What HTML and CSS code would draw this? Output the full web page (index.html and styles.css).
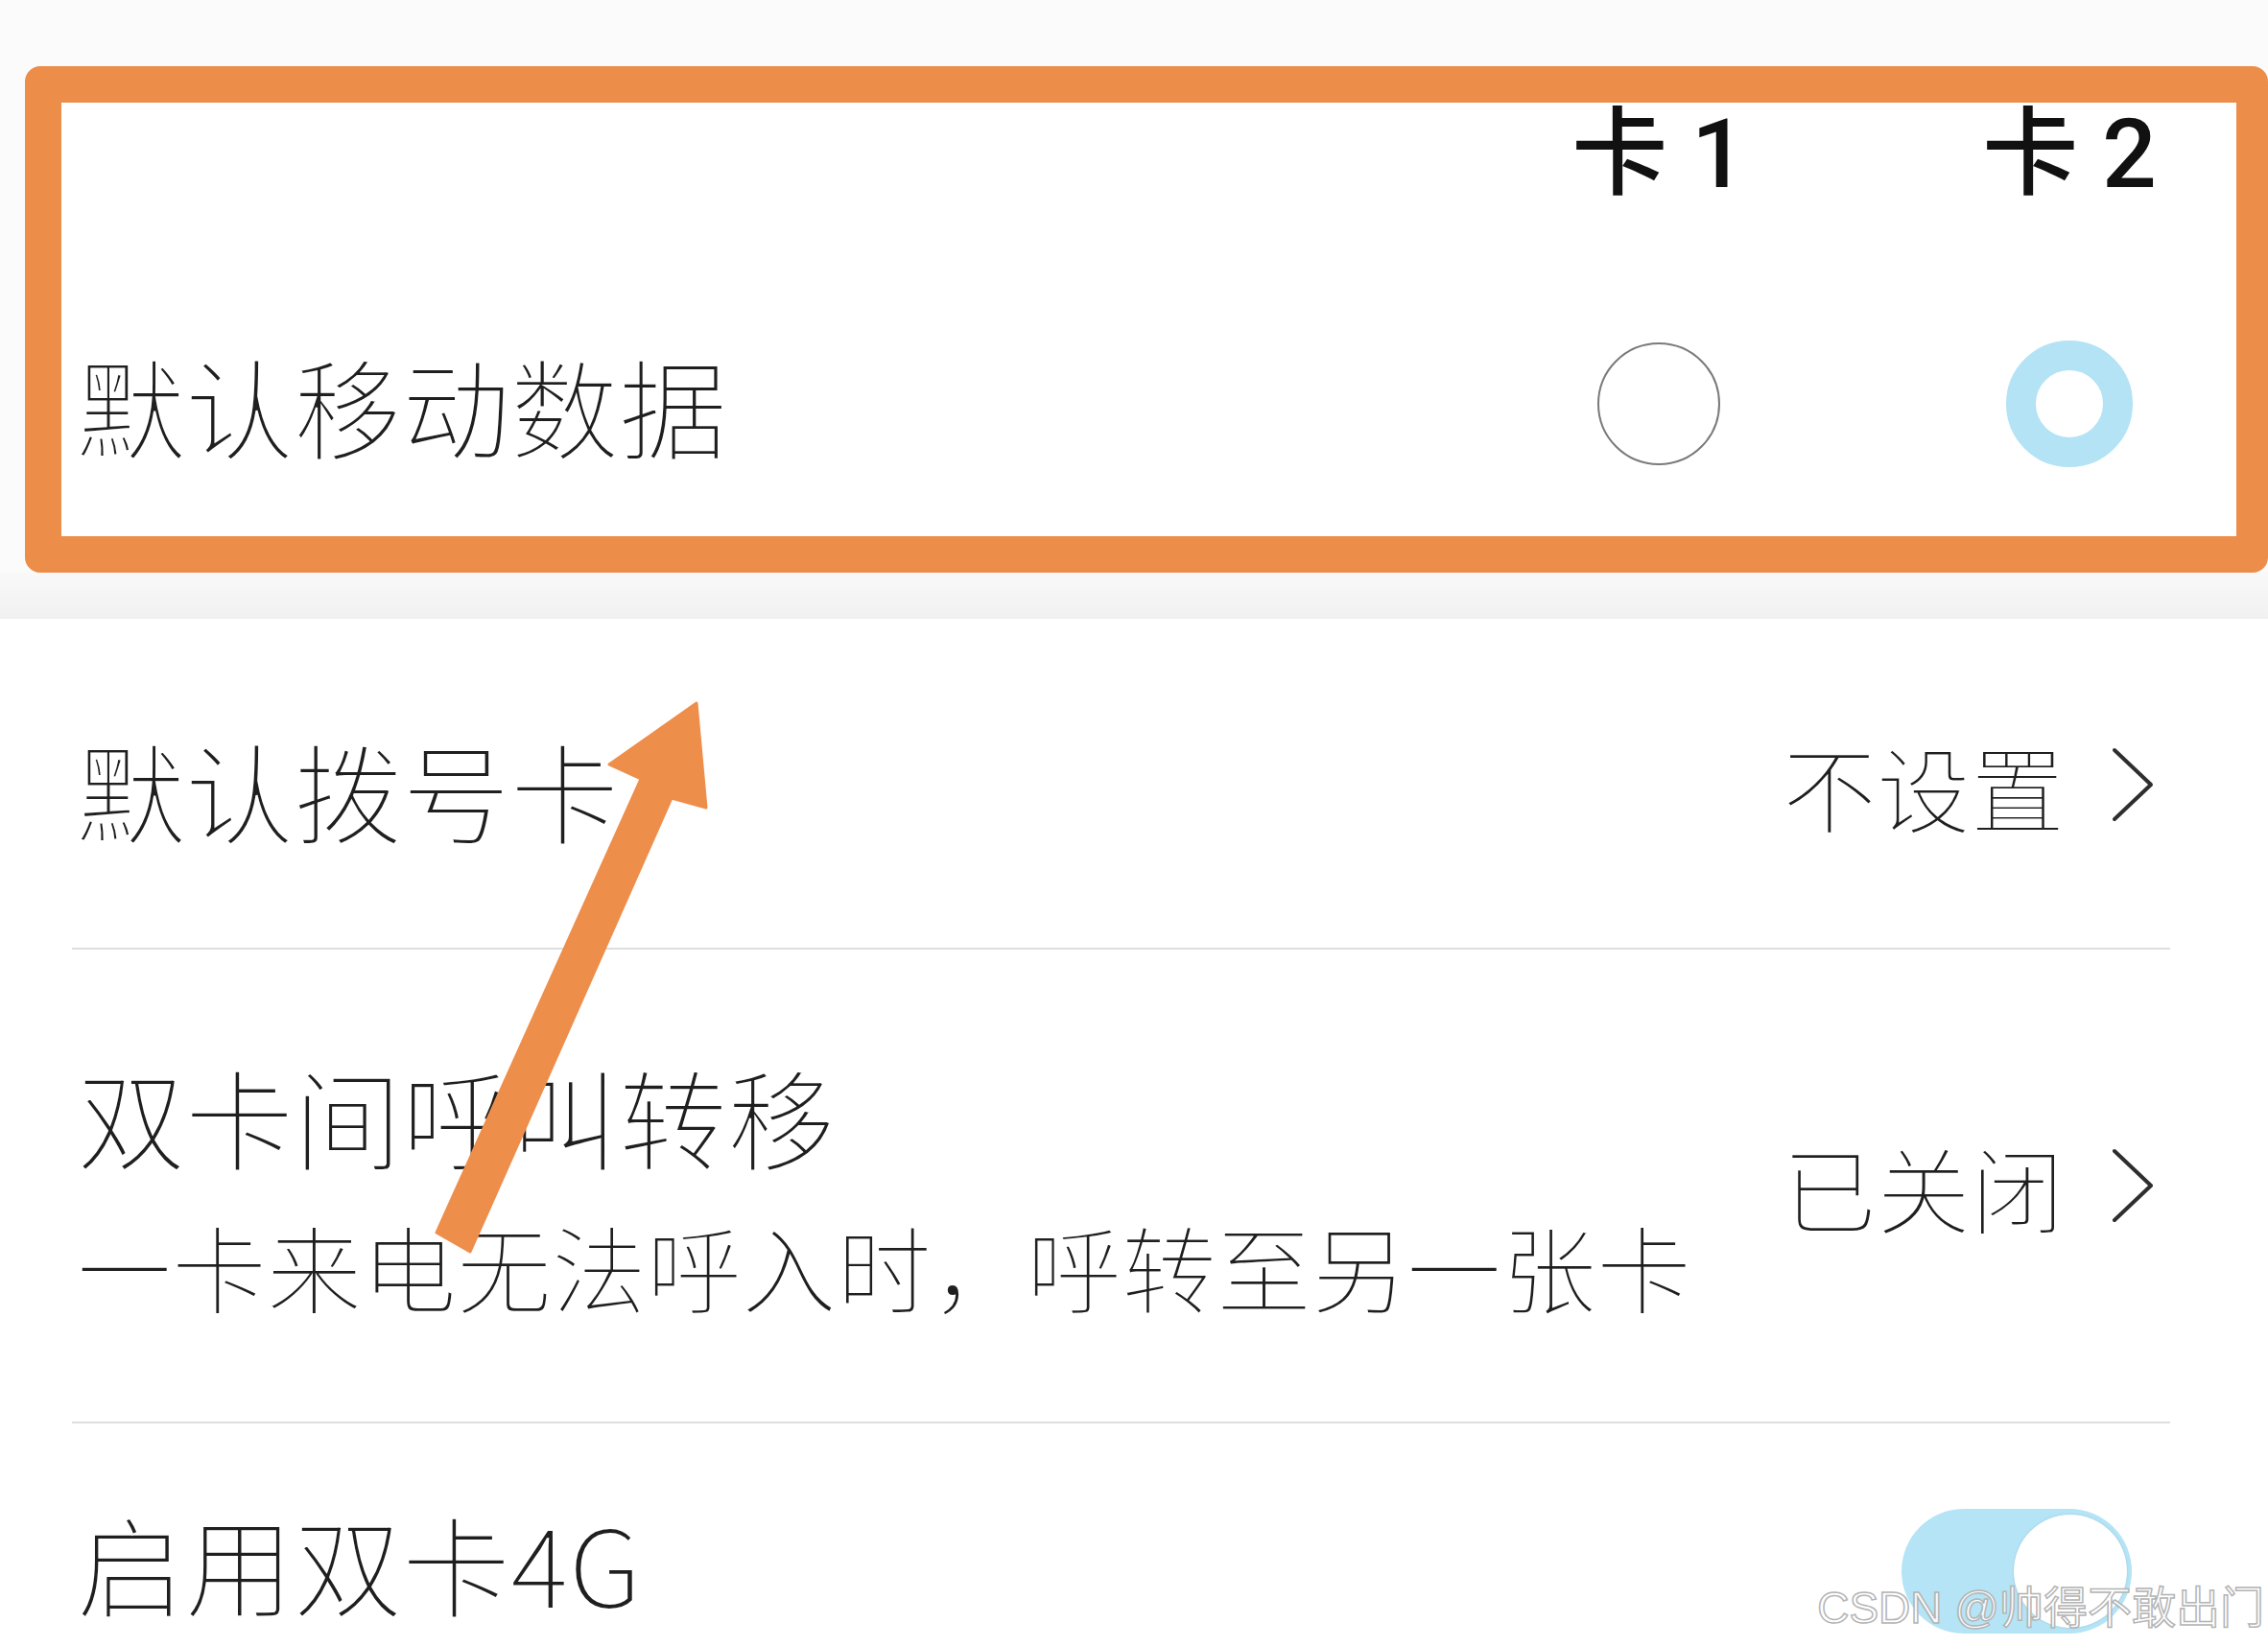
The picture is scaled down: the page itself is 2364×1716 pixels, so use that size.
FILE: index.html
```html
<!DOCTYPE html>
<html lang="zh-CN">
<head>
<meta charset="utf-8">
<title>双卡设置</title>
<link rel="stylesheet" href="styles.css">
</head>
<body>
<div class="page">
  <div class="top-area">
    <section class="sim-card">
      <div class="sim-head">
        <span class="sim-col sim-label">卡 1</span>
        <span class="sim-col sim-label">卡 2</span>
      </div>
      <div class="sim-row">
        <span class="title">默认移动数据</span>
        <span class="sim-col"><span class="radio"></span></span>
        <span class="sim-col"><span class="radio checked"></span></span>
      </div>
    </section>
  </div>
  <div class="band"></div>
  <ul class="list">
    <li class="item item-dial">
      <span class="title">默认拨号卡</span>
      <span class="value">不设置<svg class="chev" viewBox="0 0 46 80"><polyline points="4,4 42,40 4,76"/></svg></span>
    </li>
    <li class="item item-forward">
      <div class="text">
        <span class="title">双卡间呼叫转移</span>
        <span class="sub">一卡来电无法呼入时，呼转至另一张卡</span>
      </div>
      <span class="value">已关闭<svg class="chev" viewBox="0 0 46 80"><polyline points="4,4 42,40 4,76"/></svg></span>
    </li>
    <li class="item item-4g">
      <span class="title">启用双卡4G</span>
      <span class="toggle"><span class="knob"></span></span>
    </li>
  </ul>
  <svg class="arrow" viewBox="0 0 2364 1716">
    <polygon points="455,1285 668,812 635,797 726,733 736,842 700,832 490,1305"/>
  </svg>
  <div class="watermark">CSDN @帅得不敢出门</div>
</div>
</body>
</html>
```

FILE: styles.css
```css
html, body {
  margin: 0;
  padding: 0;
  background: #ffffff;
}

body {
  font-family: "Noto Sans CJK SC", "Noto Sans", sans-serif;
  color: #222222;
}

.page {
  position: relative;
  width: 2364px;
  height: 1716px;
  overflow: hidden;
  background: #ffffff;
}

.top-area {
  background: #fbfbfb;
  padding: 69px 0 0 26px;
}

.sim-card {
  box-sizing: border-box;
  height: 528px;
  border: 38px solid #ed8d4a;
  border-right-width: 33px;
  border-radius: 16px;
  background: #ffffff;
  padding: 0 74px 0 16px;
  display: flex;
  flex-direction: column;
}

.sim-head {
  display: flex;
  justify-content: flex-end;
  align-items: center;
  gap: 228px;
  height: 108px;
}

.sim-col {
  width: 200px;
  display: flex;
  justify-content: center;
  align-items: center;
}

.sim-label {
  font-family: "Roboto", "Noto Sans CJK SC", sans-serif;
  font-size: 100px;
  font-weight: 500;
  color: #111111;
  line-height: 1;
  white-space: pre;
}

.sim-row {
  display: flex;
  align-items: center;
  gap: 228px;
  margin-top: 140px;
  height: 132px;
}

.sim-row .title {
  flex: 1;
}

.title {
  font-size: 113px;
  font-weight: 300;
  line-height: 130px;
  color: #1f1f1f;
  white-space: nowrap;
  -webkit-text-stroke: 2px #ffffff;
}

.radio {
  box-sizing: border-box;
  display: block;
  width: 128px;
  height: 128px;
  border: 2px solid #7a7a7a;
  border-radius: 50%;
  background: #ffffff;
}

.radio.checked {
  width: 132px;
  height: 132px;
  border: 31px solid #b3e3f5;
}

.band {
  height: 47px;
  background: linear-gradient(#f9f9f9, #f1f1f1);
  border-bottom: 1px solid #ececec;
}

.list {
  list-style: none;
  margin: 0;
  padding: 0;
}

.item {
  box-sizing: border-box;
  display: flex;
  align-items: center;
  justify-content: space-between;
  margin: 0 102px 0 75px;
  padding: 0 16px 0 5px;
  border-bottom: 2px solid #dedede;
}

.item-dial {
  height: 345px;
  padding-top: 10px;
}

.item-dial .value {
  margin-top: -8px;
}

.item-forward {
  height: 494px;
}

.item-forward .text {
  display: flex;
  flex-direction: column;
  margin-top: 4px;
}

.item-forward .sub {
  font-size: 99px;
  font-weight: 300;
  line-height: 120px;
  margin-top: 32px;
  white-space: nowrap;
  color: #1f1f1f;
  -webkit-text-stroke: 2px #ffffff;
}

.item-4g {
  height: 288px;
  border-bottom: none;
}

.item-4g .toggle {
  margin-top: 20px;
}

.value {
  display: flex;
  align-items: center;
  font-size: 98px;
  font-weight: 300;
  line-height: 120px;
  color: #1f1f1f;
  -webkit-text-stroke: 2px #ffffff;
}

.chev {
  width: 46px;
  height: 80px;
  margin-left: 48px;
  fill: none;
  stroke: #2e2e2e;
  stroke-width: 4;
  stroke-linecap: round;
  stroke-linejoin: round;
}

.toggle {
  position: relative;
  box-sizing: border-box;
  display: flex;
  justify-content: flex-end;
  align-items: center;
  width: 240px;
  height: 130px;
  margin-right: 24px;
  padding: 0 5px;
  border-radius: 65px;
  background: #b4e4f5;
}

.knob {
  display: block;
  width: 118px;
  height: 118px;
  border-radius: 50%;
  background: #ffffff;
  box-shadow: 0 0 2px rgba(120, 170, 190, 0.6);
}

.arrow {
  position: absolute;
  left: 0;
  top: 0;
  width: 2364px;
  height: 1716px;
  pointer-events: none;
}

.arrow polygon {
  fill: #ee8e4b;
  stroke: #ee8e4b;
  stroke-width: 3;
  stroke-linejoin: round;
}

.watermark {
  position: absolute;
  right: 4px;
  top: 1646px;
  font-family: "Liberation Sans", "Noto Sans CJK SC", sans-serif;
  font-size: 46px;
  line-height: 60px;
  color: rgba(255, 255, 255, 0.9);
  -webkit-text-stroke: 1.5px #b4b4b4;
  white-space: nowrap;
}
```
